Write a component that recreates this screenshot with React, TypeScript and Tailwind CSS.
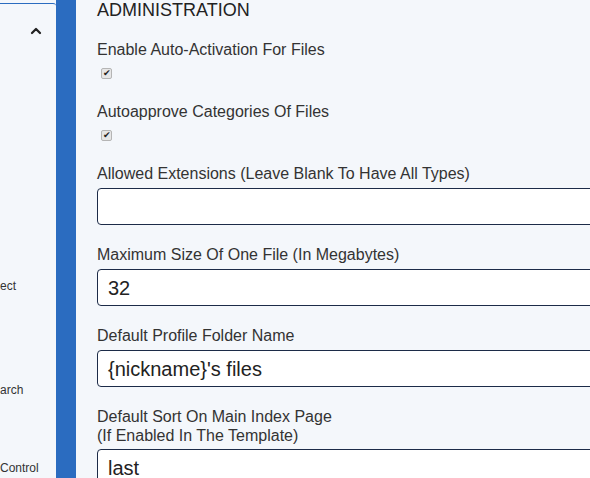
import React from 'react';
import { ChevronUp } from 'lucide-react';

const font = { fontFamily: '"Liberation Sans", Arial, sans-serif' };

function Check() {
  return (
    <span className="flex h-[11px] w-[11px] items-center justify-center rounded-[2px] border border-[#b5b5b5] bg-[#e6e6e6] text-[9px] leading-none text-[#222]">
      ✔
    </span>
  );
}

function TextBox({ value }: { value?: string }) {
  return (
    <div className="h-[37px] w-[560px] rounded-[4px] border border-[#1c2b48] bg-white pl-[10px] text-[20px] leading-[36px] text-[#222]">
      {value}
    </div>
  );
}

export default function App() {
  return (
    <div className="flex h-[478px] w-[590px] overflow-hidden bg-[#f4f7fb]" style={font}>
      {/* left menu, mostly scrolled out of view */}
      <div className="w-[56px] shrink-0 overflow-hidden">
        <div className="mt-[3px] h-[500px] rounded-tr-[3px] border-t border-[#2b6cc0] bg-[#f4f7fb] text-[12px] text-[#333]">
          <div className="flex justify-end pr-[12px] pt-[19px]">
            <ChevronUp className="h-[16px] w-[16px] text-[#222]" strokeWidth={3.4} />
          </div>
          <div className="mt-[240px] leading-[14px] whitespace-nowrap">ect</div>
          <div className="mt-[90px] leading-[14px] whitespace-nowrap">arch</div>
          <div className="mt-[64px] leading-[14px] whitespace-nowrap">Control</div>
        </div>
      </div>

      {/* accent bar */}
      <div className="w-[20px] shrink-0 bg-[#2b6cc0]" />

      {/* settings form */}
      <div className="flex-1 overflow-hidden pl-[21px] text-[#333]">
        <h2 className="text-[18px] leading-[20px] text-[#222]">ADMINISTRATION</h2>

        <div className="mt-[20px] text-[16px] leading-[20px]">Enable Auto-Activation For Files</div>
        <div className="mt-[8px] pl-[4px]">
          <Check />
        </div>

        <div className="mt-[23px] text-[16px] leading-[20px]">Autoapprove Categories Of Files</div>
        <div className="mt-[8px] pl-[4px]">
          <Check />
        </div>

        <div className="mt-[23px] text-[16px] leading-[20px]">Allowed Extensions (Leave Blank To Have All Types)</div>
        <div className="mt-[4px]">
          <TextBox />
        </div>

        <div className="mt-[20px] text-[16px] leading-[20px]">Maximum Size Of One File (In Megabytes)</div>
        <div className="mt-[4px]">
          <TextBox value="32" />
        </div>

        <div className="mt-[20px] text-[16px] leading-[20px]">Default Profile Folder Name</div>
        <div className="mt-[4px]">
          <TextBox value="{nickname}'s files" />
        </div>

        <div className="mt-[20px] text-[16px] leading-[19px]">
          Default Sort On Main Index Page
          <br />
          (If Enabled In The Template)
        </div>
        <div className="mt-[4px]">
          <TextBox value="last" />
        </div>
      </div>
    </div>
  );
}
